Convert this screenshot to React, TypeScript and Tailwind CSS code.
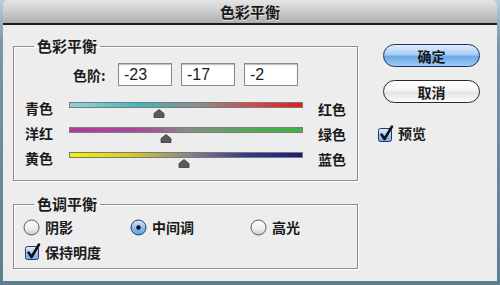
import { useId } from "react";

const sliders = [
  { left: "青色", right: "红色", value: -23, bg: "bg-[linear-gradient(to_right,#8fd6d8_0%,#3fb7ba_30%,#8c8c8c_55%,#cf4a4a_80%,#e41c1c_100%)]" },
  { left: "洋红", right: "绿色", value: -17, bg: "bg-[linear-gradient(to_right,#b23a9c_0%,#a84a9a_30%,#8a8a8a_50%,#55a85a_75%,#3cb444_100%)]" },
  { left: "黄色", right: "蓝色", value: -2, bg: "bg-[linear-gradient(to_right,#f6f200_0%,#d8d020_25%,#8a8a84_50%,#3a3a92_75%,#1c1c78_100%)]" },
];

const Check = () => {
  const id = useId();
  return (
    <svg width="17" height="18" viewBox="0 0 17 18" className="shrink-0">
      <defs>
        <linearGradient id={id} x1="0" y1="0" x2="0" y2="1">
          <stop offset="0" stopColor="#e6f1fc" />
          <stop offset="0.5" stopColor="#a9cdf0" />
          <stop offset="1" stopColor="#6fa8e2" />
        </linearGradient>
      </defs>
      <rect x="1.5" y="3.5" width="13" height="13" rx="2" fill={`url(#${id})`} stroke="#26346c" />
      <path d="M4.5 9.5 L7.5 14 L15 1.5" stroke="#111" strokeWidth="2.6" fill="none" strokeLinecap="round" strokeLinejoin="round" />
    </svg>
  );
};

const Radio = ({ on }: { on?: boolean }) => {
  const id = useId();
  return (
    <svg width="17" height="17" viewBox="0 0 17 17" className="shrink-0">
      <defs>
        <linearGradient id={id} x1="0" y1="0" x2="0" y2="1">
          {on ? (
            <>
              <stop offset="0" stopColor="#dbeafb" />
              <stop offset="0.5" stopColor="#8fbfee" />
              <stop offset="1" stopColor="#5a9ee4" />
            </>
          ) : (
            <>
              <stop offset="0" stopColor="#ffffff" />
              <stop offset="0.6" stopColor="#ececec" />
              <stop offset="1" stopColor="#c8c8c8" />
            </>
          )}
        </linearGradient>
      </defs>
      <circle cx="8.5" cy="8.5" r="7.5" fill={`url(#${id})`} stroke={on ? "#26346c" : "#5a5a5a"} />
      {on && <circle cx="8.5" cy="8.5" r="2.2" fill="#111" />}
    </svg>
  );
};

const Thumb = () => (
  <svg width="12" height="9" viewBox="0 0 12 9">
    <path d="M6 0.5 L11 4.5 L11 8.5 L1 8.5 L1 4.5 Z" fill="#5a5a5a" stroke="#3a3a3a" strokeWidth="0.8" strokeLinejoin="round" />
  </svg>
);

const App = () => {
  const font = "font-['Noto_Sans_CJK_SC',sans-serif]";
  return (
    <div className={`w-[500px] h-[285px] bg-[linear-gradient(to_bottom,#b8d0da_0%,#7896a4_15%,#5f7e8c_100%)] overflow-hidden ${font} text-[#1a1a1a]`}>
      <div className="mx-[3px] h-[281px] bg-[#ededed] rounded-t-[6px] overflow-hidden flex flex-col">
        {/* title */}
        <div className="h-[25px] shrink-0 border-b-2 border-[#1e1e1e] bg-[linear-gradient(to_bottom,#e4e4e4_0%,#cfcfcf_45%,#aeaeae_100%)] flex items-center justify-center">
          <span className="text-[15px] font-semibold leading-none [text-shadow:0_1px_0_#e8e8e8]">色彩平衡</span>
        </div>

        <div className="flex">
          {/* left */}
          <div className="ml-[10px] w-[345px] flex flex-col">
            <fieldset className="mt-[11px] border border-[#8c8c8c] shadow-[inset_1px_1px_0_#fff,1px_1px_0_#fff] pb-[5px]">
              <legend className="ml-[20px] px-[3px] text-[15px] leading-[20px] font-semibold">色彩平衡</legend>

              <div className="mt-[7px] flex items-center h-[23px] pl-[59px]">
                <span className="w-[45px] text-[14px] font-semibold leading-none">色阶:</span>
                <div className="flex gap-[9px]">
                  {["-23", "-17", "-2"].map((v) => (
                    <div key={v} className="w-[54px] h-[23px] bg-white border border-[#8a8a8a] shadow-[inset_0_1px_1px_#bbb] flex items-center pl-[5px] text-[16px] font-['Liberation_Sans',sans-serif]">
                      {v}
                    </div>
                  ))}
                </div>
              </div>

              <div className="mt-[14px] flex flex-col">
                {sliders.map((s) => (
                  <div key={s.left} className="h-[25px] flex items-start pl-[11px]">
                    <span className="w-[44px] text-[14px] leading-[15px] font-semibold mt-[1px]">{s.left}</span>
                    <div className="relative w-[234px] mt-[2px]">
                      <div className={`h-[6px] border border-[#7a7a7a] ${s.bg}`} />
                      <div className="absolute top-[7px] -ml-[6px]" style={{ left: `${((s.value + 100) / 200) * 100}%` }}>
                        <Thumb />
                      </div>
                    </div>
                    <span className="ml-[15px] text-[14px] leading-[15px] font-semibold mt-[2px]">{s.right}</span>
                  </div>
                ))}
              </div>
            </fieldset>

            <fieldset className="mt-[13px] border border-[#8c8c8c] shadow-[inset_1px_1px_0_#fff,1px_1px_0_#fff] pb-[8px]">
              <legend className="ml-[20px] px-[3px] text-[15px] leading-[20px] font-semibold">色调平衡</legend>
              <div className="mt-[5px] h-[16px] flex items-center pl-[9px] text-[14px] font-semibold">
                <div className="w-[107px] flex items-center gap-[5px]"><Radio />阴影</div>
                <div className="w-[120px] flex items-center gap-[5px]"><Radio on />中间调</div>
                <div className="flex items-center gap-[5px]"><Radio />高光</div>
              </div>
              <div className="mt-[9px] h-[16px] flex items-center pl-[10px] gap-[4px] text-[14px] font-semibold">
                <Check />保持明度
              </div>
            </fieldset>
          </div>

          {/* right */}
          <div className="ml-[19px] flex flex-col">
            <button className="ml-[6px] mt-[19px] w-[97px] h-[23px] rounded-full border border-[#1f2c66] bg-[linear-gradient(to_bottom,#e2eefb_0%,#a6cdf2_45%,#6aa9e8_55%,#9fcdf4_100%)] text-[14px] font-semibold leading-none">
              确定
            </button>
            <button className="ml-[6px] mt-[13px] w-[97px] h-[23px] rounded-full border border-[#2a2a2a] bg-[linear-gradient(to_bottom,#ffffff_0%,#f4f4f4_45%,#e4e4e4_55%,#fbfbfb_100%)] text-[14px] font-semibold leading-none">
              取消
            </button>
            <div className="mt-[20px] flex items-center gap-[4px] text-[14px] font-semibold">
              <Check />预览
            </div>
          </div>
        </div>
      </div>
    </div>
  );
};

export default App;
